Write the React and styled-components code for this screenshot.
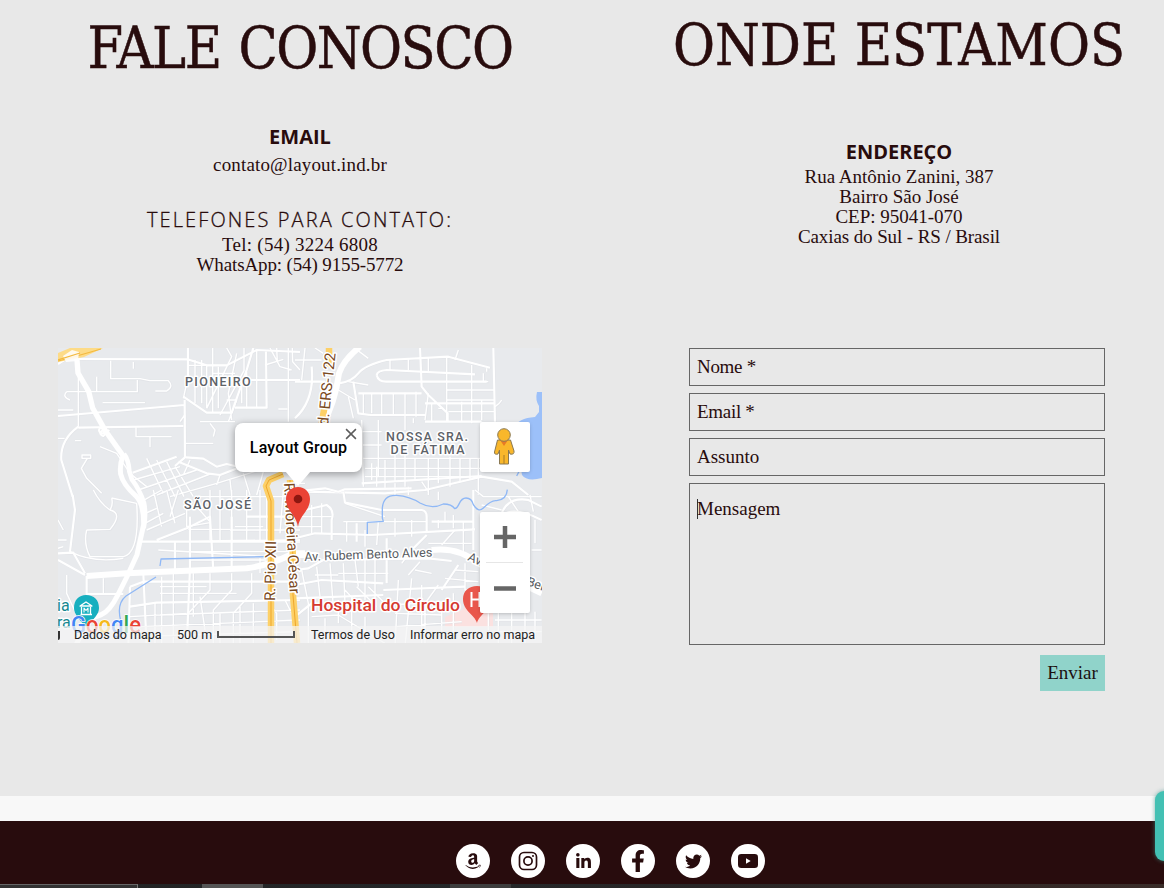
import React from "react";
import styled, { createGlobalStyle } from "styled-components";
import { FaAmazon, FaLinkedinIn, FaFacebookF, FaTwitter } from "react-icons/fa";

const GlobalStyle = createGlobalStyle`
  * { box-sizing: border-box; }
  html, body { margin: 0; padding: 0; }
  body { background: #e8e8e8; color: #280c0d; overflow: hidden; }
`;

const serif = `"Liberation Serif", serif`;

const Page = styled.div`
  width: 1164px;
  height: 888px;
  display: flex;
  flex-direction: column;
  position: relative;
  overflow: hidden;
`;

const Main = styled.main`
  display: grid;
  grid-template-columns: 600px 530px;
  column-gap: 34px;
  height: 796px;
  background: #e8e8e8;
`;

const Column = styled.section`
  display: flex;
  flex-direction: column;
  align-items: center;
`;

const Intro = styled.div`
  height: 348px;
  padding-top: ${(p) => p.$top}px;
  display: flex;
  flex-direction: column;
  align-items: center;
`;

const Title = styled.h1`
  margin: 0;
  font: 400 57px/70px "DejaVu Serif Condensed", "DejaVu Serif", serif;
  font-stretch: condensed;
  letter-spacing: ${(p) => p.$spacing}px;
  word-spacing: ${(p) => p.$gap || 0}px;
  -webkit-text-stroke: 0.5px #280c0d;
  white-space: nowrap;
`;

const Subtitle = styled.h2`
  margin: ${(p) => p.$gap}px 0 0;
  font: ${(p) => (p.$light ? 300 : 700)} 20px/28px "Open Sans", sans-serif;
  letter-spacing: ${(p) => p.$spacing || 0}px;
  -webkit-text-stroke: ${(p) => (p.$light ? 0.3 : 0)}px #280c0d;
  white-space: nowrap;
`;

const Line = styled.p`
  margin: 0;
  font: 400 19px/20px ${serif};
  letter-spacing: ${(p) => p.$spacing || 0}px;
  white-space: nowrap;
`;

const EmailLine = styled(Line)`
  margin-top: 4px;
`;

const Lines = styled.div`
  margin-top: 1px;
  text-align: center;
`;

const MapFrame = styled.div`
  position: relative;
  width: 484px;
  height: 295px;
  background: #e8eaed;
  overflow: hidden;
`;

const MapDrawing = styled.svg`
  display: block;
  width: 484px;
  height: 295px;
`;

const InfoWindow = styled.div`
  position: absolute;
  left: 177px;
  top: 75px;
  width: 127px;
  height: 49px;
  border-radius: 8px;
  background: #fff;
  box-shadow: 0 2px 7px 1px rgba(0, 0, 0, 0.3);
  display: flex;
  align-items: center;
  justify-content: center;
  font: 500 16px/20px Roboto, sans-serif;
  letter-spacing: 0.15px;
  color: #000;
  white-space: nowrap;

  &::after {
    content: "";
    position: absolute;
    left: 50px;
    top: 48px;
    border: 13px solid transparent;
    border-top: 15px solid #fff;
    border-bottom: 0;
  }
`;

const CloseMark = styled.svg`
  position: absolute;
  right: 5px;
  top: 5px;
  width: 12px;
  height: 12px;
`;

const MapButton = styled.div`
  position: absolute;
  left: 422px;
  top: ${(p) => p.$top}px;
  width: 50px;
  height: ${(p) => p.$height}px;
  border-radius: 2px;
  background: #fff;
  box-shadow: 0 1px 4px -1px rgba(0, 0, 0, 0.3);
  svg { display: block; }
`;

const MapTerms = styled.div`
  position: absolute;
  left: 0;
  right: 0;
  bottom: 0;
  height: 17px;
  padding: 0 7px 0 16px;
  display: flex;
  align-items: center;
  background: rgba(245, 245, 245, 0.72);
  font: 400 12.5px/16px Roboto, sans-serif;
  color: #222;
  white-space: nowrap;

  &::before {
    content: "";
    position: absolute;
    left: 0;
    top: 5px;
    width: 2px;
    height: 9px;
    background: #333;
    border-radius: 0 0 2px 0;
  }
`;

const Term = styled.span`
  width: ${(p) => p.$width}px;
  margin-right: ${(p) => p.$gap}px;
`;

const ScaleBar = styled.span`
  width: 78px;
  height: 7px;
  margin-right: 16px;
  border: 2px solid #555;
  border-top: 0;
`;

const Form = styled.form`
  width: 416px;
  margin-left: -4px;
  display: flex;
  flex-direction: column;
  gap: 7px;
`;

const Field = styled.div`
  height: ${(p) => (p.$tall ? 162 : 38)}px;
  padding: ${(p) => (p.$tall ? 15 : 8)}px 7px;
  border: 1px solid #666;
  font: 400 19px/20px ${serif};
  letter-spacing: ${(p) => p.$spacing || 0}px;
  color: #280c0d;
`;

const Caret = styled.span`
  display: inline-block;
  width: 1px;
  height: 20px;
  margin-right: -1px;
  background: #333;
  vertical-align: top;
`;

const Submit = styled.button`
  align-self: flex-end;
  width: 65px;
  height: 36px;
  margin-top: 3px;
  padding: 0;
  border: 0;
  background: #90d3ca;
  color: #1c1010;
  font: 400 19px/20px ${serif};
`;

const Band = styled.div`
  height: 25px;
  background: #f8f8f8;
`;

const Footer = styled.footer`
  height: 63px;
  padding: 23px 0 0 456px;
  display: flex;
  gap: 21px;
  background: #280c0d;
`;

const Social = styled.a`
  width: 34px;
  height: 34px;
  border-radius: 50%;
  background: #fff;
  color: #280c0d;
  display: flex;
  align-items: center;
  justify-content: center;
`;

const Taskbar = styled.div`
  height: 4px;
  display: flex;
  background: linear-gradient(90deg, #222 0, #25282a 40%, #292626 60%, #3a2d29 100%);
`;

const TaskItem = styled.span`
  width: ${(p) => p.$width}px;
  margin-right: ${(p) => p.$gap}px;
  background: ${(p) => p.$color};
  border-top: ${(p) => (p.$edge ? "1px solid #666" : "0")};
  border-right: ${(p) => (p.$edge ? "1px solid #777" : "0")};
`;

const ChatTab = styled.div`
  position: absolute;
  left: 1155px;
  top: 791px;
  width: 30px;
  height: 70px;
  border-radius: 9px;
  background: #43c0b3;
  box-shadow: 0 0 4px rgba(60, 150, 140, 0.7);
`;

/* Streets are grouped by map quadrant, in thirds of a pixel. */
const quadrants = [
  {
    x: 50, y: 340,
    main: "",
    mid: "M24 72L70 43M80 57L412 58L470 76L530 76L620 30L750 36M24 228L404 195M85 263L400 258M400 170L470 218L545 218L590 90L610 24M160 270Q142 280 160 288L178 270M85 260Q30 300 34 360L68 470M404 180L405 352L375 378M408 352L460 356L500 380L530 372L570 382M385 365L470 400L510 405L570 382M248 398L380 350M648 35L650 203L555 203M555 120H750M414 24V118",
    minor: "M85 90V260M182 62V116H270L300 122H355Q372 140 350 153H316M250 66V86M140 110V155M50 155H262V120M50 155Q35 170 60 180M158 188H285M24 210H70M258 262V290H365M300 290V322M404 310H490M480 250L495 270L490 290M450 245H555M75 302H94M96 345H122V355H96ZM112 355L94 385L110 415L155 460M150 320L200 340L240 400L290 440M24 295H44M414 112L400 175M435 60V190M455 60V190M470 75V205M488 24V218M505 80V205M412 76H530M490 100H555M530 24L545 50L470 205M582 24V92L510 225M560 40L535 160L545 240M530 180H560L535 245M575 120V190M590 95V205M620 30V203M660 24L690 80L725 90M645 75L700 58M680 24L682 65M727 24L728 65L750 90M390 245L404 225V245M685 207H712M290 355L340 460M320 360L375 470M350 365L402 470M375 380L430 470M250 420L390 380M265 450L440 390M320 465L480 402M420 360L400 405M360 470L500 430L645 385M510 405L500 435M580 400L600 465M640 395L620 465M540 420L545 465M715 24V245",
  },
  {
    x: 295, y: 340,
    main: "M195 20Q145 60 132 100Q120 190 80 260",
    mid: "M132 130Q170 125 190 100T275 60L460 50L585 83M245 105Q248 92 275 90L540 103M245 105Q250 126 275 125H575M375 20L380 140L400 165L458 220V245M595 20L600 245M175 125L190 220L225 225M190 160H380M0 235Q60 180 50 80M0 125H90M200 430L560 408M390 190H600M390 245H560M225 225H390M30 455L270 460L390 450L560 410L650 425L700 465",
    minor: "M30 24L20 120M0 60H80M60 24L85 40M285 60V93M340 58V90M400 52V95M455 50V245M530 75V190M490 30L480 60M565 100V125H580M575 95V85M600 200Q615 190 620 180M600 150H560M455 150H600M455 180H600M460 215H600M260 160V225M230 160V220M205 160V222M295 160V225M330 158V245M363 155V230M400 160L390 240M330 245V270M355 235V250M410 190V245M430 205H445M500 185V245M530 185V250M560 180V240M200 240L205 440M230 370V420M250 240V410M200 275H260M200 315H260M200 355H560M245 380V440M270 360V450M300 345V425M330 345V440M360 355V420M400 355V450M430 355V430M465 350V440M495 355V425M525 355V420M550 355V465M210 385H560M210 410H560M380 425L400 455M300 430V465M340 440V465M0 430H30M160 170L175 235M130 150L180 180M180 25L220 55M160 125L220 135",
  },
  {
    x: 50, y: 490,
    main: "M110 258L230 250L590 235Q660 225 720 195L750 195M750 195H800",
    mid: "M24 190L70 188L105 250M24 210L105 255M110 258V312H220M68 15L75 60L60 185M275 155L420 155L750 150M375 155V240M240 290L235 470M240 290L280 275H750M280 250L290 470M320 150L410 115L480 80L490 240M420 80V235L410 470M545 80V230M240 350L320 338L750 330M590 80H750M420 155H750",
    minor: "M110 120Q100 160 120 200H220Q270 190 260 40L185 24M110 120L180 118Q220 70 180 60Q150 40 130 0M185 24Q190 45 180 60M60 185Q130 220 220 205M24 90L40 120M50 255V310L80 375M160 265V310M275 75L320 55M265 40L335 0M285 100L340 70M290 120L405 70M310 0L335 110M350 0L375 100M385 0L360 80M410 30V110L480 98M440 50L480 95V150M480 0V95M510 0V150M545 0V150M590 0V150M630 0V150M415 118H540M420 185H750M325 180L750 205M420 210H650M450 20H750M540 120H750M555 110H640M330 290H470M330 310H560M335 260V470M370 250V470M430 250V380M480 250V300L410 375M545 250V300L490 360V470M605 250V310L550 370V470M650 0V150M630 205V250M330 375L750 360M240 380L410 370M270 410L750 390M315 340V470M450 320L465 420M510 370V460M570 350V460M610 340V460M250 440L750 425M650 330L680 370V450M700 0L690 130M705 330L730 380V450M40 170L24 175M24 150H50",
  },
  {
    x: 295, y: 490,
    main: "M-20 190H30M410 180Q490 170 550 220L740 310",
    mid: "M0 240L40 235L85 210L400 205L470 213M0 285L80 270L265 280M0 145L60 130L230 135L540 118M0 5L90 -5L130 5L150 -2L350 -5M145 5L150 38L260 60H380Q395 62 395 80V130M535 0V180M275 145V280M30 60L95 45Q120 60 110 90V150M185 100V155M410 95H535M395 135L350 180M490 225L440 300M265 300L510 290M0 325L265 315M0 380L50 340M620 70Q640 20 700 30L740 50M620 80Q650 45 740 90",
    minor: "M50 45V130M80 40V130M0 80H110M0 110H80M150 40L270 80M145 95H395M155 95V155M210 120V170M250 95L245 165M300 85V140M350 90V140M430 90V115M475 75V115M505 95V185M400 0V15M430 5V30M450 65V95M400 160H530M480 120L440 165M20 240L40 340V470M65 230L75 320M105 220L115 350M145 220L150 340M180 210L190 290M210 210V330M240 210V330M310 270L300 470M350 265L330 470M380 285V470M430 285L390 340V470M265 345L375 340M50 380L130 375L270 460M90 385V470M130 330V400M170 320V450M210 380V470M300 370L440 375M300 410L500 395M440 350V450M475 310V450M510 220V300H550M480 240L550 245M450 265L550 275M580 370V420M610 365V460M650 365V460M690 365V460M720 365V450M600 390H740M600 425H740M185 290L245 350M220 290L270 340M150 300L210 365M130 250H280M60 255H130M540 0L565 20H740M640 20L670 65M705 15L715 65M560 45L620 60M720 90V160M710 180H740M350 180L320 220M375 215L340 255M360 240L410 250",
  },
];

const place = (q) => `translate(${q.x} ${q.y}) scale(.333333)`;

function MapCanvas() {
  return (
    <MapDrawing viewBox="58 348 484 295" fill="none" strokeLinejoin="round">
      <rect x="58" y="348" width="484" height="295" fill="#e8eaed" />
      <path d="M542 392H537Q535 400 539 406V412L535 417Q518 418 514 428L522 475Q527 482 542 478Z" fill="#9cc0f9" />
      <path d="M445 617L462 610L470 600H493V627H445Z" fill="#fbe1e0" />
      {quadrants.map((q, i) => (
        <g key={i} transform={place(q)}>
          <path d={q.minor + q.mid} strokeWidth="7" stroke="#dddfe4" opacity=".6" transform="translate(1 1)" />
          <path d={q.minor} strokeWidth="4.2" stroke="#fff" />
          <path d={q.mid} strokeWidth="6.4" stroke="#fff" />
        </g>
      ))}
      <g stroke="#8fb8f6" strokeWidth="1.300">
        <path d="M160 566L161 559L270 556.500M156 577L126 596Q116 604 121 622" />
        <path transform="translate(300 348) scale(.333333)" strokeWidth="4" d="M202 558V523L250 520L247 510V480Q250 440 290 442Q330 445 360 465Q395 485 430 468Q455 468 464 482C480 480 475 450 498 450Q515 450 520 470Q535 495 550 480Q575 455 590 458Q620 455 622 425M650 384L660 365" />
      </g>
      {quadrants.map((q, i) => (
        <path key={i} d={q.main} transform={place(q)} stroke="#fff" strokeWidth="18" />
      ))}
      <g transform="translate(58 348) scale(.333333)" stroke="#fff">
        <path strokeWidth="16" d="M55 10L60 75L92 130L104 180L140 245L200 330" />
        <path strokeWidth="15" d="M196 322Q184 350 188 378Q195 410 235 445Q258 470 257 530L237 620L205 690L180 740Q155 790 130 800L90 815L50 900" />
        <path strokeWidth="14" d="M198 318Q212 335 214 370L222 395Q245 425 258 465Q265 500 257 540" />
        <ellipse cx="134" cy="247" rx="11" ry="9" strokeWidth="6" />
      </g>
      <path d="M58 353L70 348H103L84 357L58 362Z" fill="#fddb87" />
      <path d="M58 361Q74 357 101 349" stroke="#f3b93f" strokeWidth="1.200" />
      <path d="M63 356L72 350L79 352L78 361L66 362Z" fill="#fff" opacity=".85" />
      <path d="M58 360L80 353" stroke="#f3b93f" strokeWidth="1.200" />
      <g strokeWidth="6.500" stroke="#fdd067">
        <path d="M329 348V367M325 405L321 426" />
        <path d="M283 474L269 480L266 486L271 501V643" />
        <path d="M290 480L293 560L293 595L297 643" />
      </g>
      <g strokeWidth="1" stroke="#eda72e">
        <path d="M283 474L269 480L266 486L271 501V643M290 480L293 560L293 595L297 643" />
      </g>
      <g fontFamily="Roboto, sans-serif" stroke="#fff" strokeWidth="3" paintOrder="stroke" strokeLinejoin="round">
        <g fill="#5d6268" fontSize="12.500" fontWeight="500" lengthAdjust="spacing">
          <text x="185" y="386" textLength="65.5">PIONEIRO</text>
          <text x="184" y="509" textLength="67">SÃO JOSÉ</text>
          <text x="386" y="441" textLength="82">NOSSA SRA.</text>
          <text x="390.500" y="453.500" textLength="74">DE FÁTIMA</text>
        </g>
        <g fill="#7b4a1e" fontSize="15">
          <text transform="translate(328 426) rotate(-84)" textLength="73" lengthAdjust="spacingAndGlyphs">d. ERS-122</text>
          <text transform="translate(275 601) rotate(-89)" textLength="60" lengthAdjust="spacingAndGlyphs">R. Pio XII</text>
          <text transform="translate(284 483) rotate(87)" textLength="111" lengthAdjust="spacingAndGlyphs">R. Moreira César</text>
        </g>
        <g fill="#565a60" fontSize="12.500">
          <text transform="translate(304.500 561) rotate(-2)" textLength="128" lengthAdjust="spacingAndGlyphs">Av. Rubem Bento Alves</text>
          <text transform="translate(467 560) rotate(24)">Av.</text>
          <text transform="translate(526 585) rotate(19)">Ber</text>
        </g>
        <text x="311" y="611" textLength="149" lengthAdjust="spacingAndGlyphs" fill="#d53a31" fontSize="17" fontWeight="500">Hospital do Círculo</text>
        <g fill="#178891" fontSize="16">
          <text x="57" y="611">ia</text>
          <text x="57" y="628">ra</text>
        </g>
      </g>
      <path d="M86 595C79 595 74 600 74 608C74 614 79 619 86 627C94 619 99 614 99 608C99 600 94 595 86 595Z" fill="#17afbf" />
      <path d="M80 606L86 602L92 606ZM80.500 614.500H92M81.500 607V614M90.500 607V614" stroke="#fff" strokeWidth="1.300" />
      <path d="M84 612.500V608L86 610.500L88 608V612.500" stroke="#fff" strokeWidth="1.100" />
      <path d="M477 623C475 615 463 611 463 599C463 591 469 586 477 586C485 586 490 592 490 599C490 611 479 615 477 623Z" fill="#e9574c" />
      <path d="M471.500 592V607M479.500 592V607M471.500 599.500H479.500" stroke="#fff" strokeWidth="2" />
      <path d="M298 527C296 514 286 511 286 499C286 492 291 487 298 487C305 487 310 492 310 499C310 511 300 514 298 527Z" fill="#ea4335" />
      <circle cx="298" cy="499" r="4.300" fill="#8c1710" />
      <text x="71" y="633" textLength="70" lengthAdjust="spacingAndGlyphs" fontFamily="Roboto, sans-serif" fontSize="23" fontWeight="500" stroke="#fff" strokeWidth="1.500" paintOrder="stroke">
        <tspan fill="#4285f4">G</tspan>
        <tspan fill="#e94435">o</tspan>
        <tspan fill="#f5b91c">o</tspan>
        <tspan fill="#4285f4">g</tspan>
        <tspan fill="#34a853">l</tspan>
        <tspan fill="#e94435">e</tspan>
      </text>
    </MapDrawing>
  );
}

function MapPanel() {
  return (
    <MapFrame>
      <MapCanvas />
      <MapTerms>
        <Term $width={87} $gap={16}>Dados do mapa</Term>
        <Term $width={35} $gap={5}>500 m</Term>
        <ScaleBar />
        <Term $width={84} $gap={15}>Termos de Uso</Term>
        <Term $width={125} $gap={0}>Informar erro no mapa</Term>
      </MapTerms>
      <InfoWindow>
        Layout Group
        <CloseMark viewBox="0 0 11 11">
          <path d="M1 1L10 10M10 1L1 10" stroke="#5c5c5c" strokeWidth="1.400" />
        </CloseMark>
      </InfoWindow>
      <MapButton $top={74} $height={50}>
        <svg width="50" height="50" viewBox="0 0 50 50">
          <path d="M17.500 18L14.500 30Q14 33 18 32L19.500 28V42H28.500V28L30 32Q34.500 33 34 29L30.500 18Z" fill="#f9b72b" stroke="#8a7954" />
          <path d="M20 18H28L24 24Z" fill="#e77a25" />
          <path d="M24 33V42" stroke="#a57a2a" />
          <circle cx="24" cy="13" r="6.300" fill="#f9b72b" stroke="#8a7954" />
        </svg>
      </MapButton>
      <MapButton $top={164} $height={101}>
        <svg width="50" height="101" viewBox="0 0 50 101">
          <path d="M14 25H36M25 14V36" stroke="#666" strokeWidth="4.500" />
          <path d="M6 50.500H43" stroke="#e6e6e6" />
          <path d="M14 76.500H36" stroke="#666" strokeWidth="4.500" />
        </svg>
      </MapButton>
    </MapFrame>
  );
}

const InstagramMark = () => (
  <svg width="20" height="20" viewBox="0 0 20 20" fill="none" stroke="currentColor" strokeWidth="1.700">
    <rect x="1.500" y="1.500" width="17" height="17" rx="4.500" />
    <circle cx="10" cy="10" r="4.100" />
    <circle cx="15" cy="5" r=".4" strokeWidth="1.400" />
  </svg>
);

const YoutubeMark = () => (
  <svg width="20" height="14" viewBox="0 0 20 14">
    <rect width="20" height="14" rx="3.300" fill="currentColor" />
    <path d="M8 4.200L12.700 7L8 9.800Z" fill="#fff" />
  </svg>
);

export default function App() {
  return (
    <Page>
      <GlobalStyle />
      <Main>
        <Column>
          <Intro $top={13}>
            <Title $spacing={-1.5} $gap={3}>FALE CONOSCO</Title>
            <Subtitle $gap={40}>EMAIL</Subtitle>
            <EmailLine $spacing={0.16}>contato@layout.ind.br</EmailLine>
            <Subtitle $light $gap={31} $spacing={2.1}>TELEFONES PARA CONTATO:</Subtitle>
            <Lines>
              <Line $spacing={0.25}>Tel: (54) 3224 6808</Line>
              <Line $spacing={-0.13}>WhatsApp: (54) 9155-5772</Line>
            </Lines>
          </Intro>
          <MapPanel />
        </Column>
        <Column>
          <Intro $top={10}>
            <Title $spacing={0}>ONDE ESTAMOS</Title>
            <Subtitle $gap={58}>ENDEREÇO</Subtitle>
            <Lines>
              <Line>Rua Antônio Zanini, 387</Line>
              <Line>Bairro São José</Line>
              <Line>CEP: 95041-070</Line>
              <Line $spacing={-0.1}>Caxias do Sul - RS / Brasil</Line>
            </Lines>
          </Intro>
          <Form>
            <Field $spacing={-0.3}>Nome *</Field>
            <Field $spacing={-0.3}>Email *</Field>
            <Field>Assunto</Field>
            <Field $tall><Caret />Mensagem</Field>
            <Submit type="button">Enviar</Submit>
          </Form>
        </Column>
      </Main>
      <Band />
      <Footer>
        <Social><FaAmazon size={18} /></Social>
        <Social><InstagramMark /></Social>
        <Social><FaLinkedinIn size={17} /></Social>
        <Social><FaFacebookF size={22} /></Social>
        <Social><FaTwitter size={17} /></Social>
        <Social><YoutubeMark /></Social>
      </Footer>
      <Taskbar>
        <TaskItem $width={138} $gap={64} $color="#333" $edge />
        <TaskItem $width={61} $gap={187} $color="#555" />
        <TaskItem $width={61} $gap={0} $color="#3d3d3d" />
      </Taskbar>
      <ChatTab />
    </Page>
  );
}
